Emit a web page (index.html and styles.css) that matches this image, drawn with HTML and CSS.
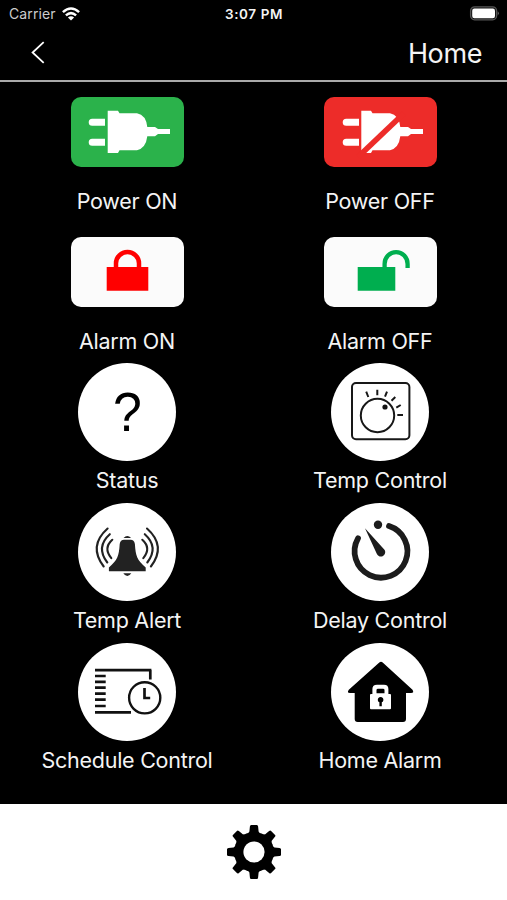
FILE: index.html
```html
<!DOCTYPE html>
<html lang="en">
<head>
<meta charset="utf-8">
<title>Home</title>
<link rel="stylesheet" href="styles.css">
</head>
<body>
<div class="status-bar">
  <div class="carrier"><span>Carrier</span>
    <svg width="18" height="14" viewBox="0 0 18 14" fill="none" stroke="#fff" stroke-width="2.5"><path d="M.9 5.2Q9-2.2 17.1 5.2M3.9 8.4Q9 3.9 14.1 8.4"/><path d="M9 13.5 5.9 10.4Q9 7.9 12.1 10.4Z" fill="#fff" stroke="none"/></svg>
  </div>
  <div class="time">3:07 PM</div>
  <div class="battery"><svg width="30" height="15" viewBox="0 0 30 15"><rect x="1.6" y=".8" width="26" height="13" rx="4" fill="#111" stroke="#555" stroke-width="1.3"/><rect x="3.2" y="2.5" width="22.8" height="9.8" rx="2.2" fill="#fff"/><path d="M28.7 5.2Q31 7.3 28.7 9.4Z" fill="#666"/></svg></div>
</div>
<header class="nav">
  <svg class="back" width="14" height="23" viewBox="0 0 14 23" fill="none" stroke="#fff" stroke-width="1.8"><path d="M12.7 1.2 1.6 11.5 12.7 21.8"/></svg>
  <h1>Home</h1>
</header>
<main class="grid">
  <div class="cell wide">
    <svg class="tile green" viewBox="0 0 113 70" fill="#fff"><path d="M34 21.7H21.2a3.5 3.5 0 0 0 0 7H34ZM34 41.7H21.2a3.5 3.5 0 0 0 0 7H34ZM36.7 13.7H47L48.5 16.3H66Q75 18 76.3 30H84L87 32H99V37H87L84 39.3H76.3Q75 51 66 53.3H48.5L47 56H36.7Z"/></svg>
    <span class="label">Power ON</span>
  </div>
  <div class="cell wide">
    <svg class="tile red" viewBox="0 0 113 70" fill="#fff"><path d="M35 21.7H22.2a3.5 3.5 0 0 0 0 7H35ZM35 41.7H22.2a3.5 3.5 0 0 0 0 7H35ZM37.3 13.7H47L48.5 16.3H66Q75 18 76.3 30H84L87 32H99V37H87L84 39.3H76.3Q75 51 66 53.3H48.5L47 56H37.3Z"/><path d="M80 16.2 34 60" stroke="#ed2c29" stroke-width="5.6"/></svg>
    <span class="label">Power OFF</span>
  </div>
  <div class="cell wide">
    <svg class="tile white" viewBox="0 0 113 70"><path fill="#f00" d="M35.7 30H77.3V53.7H35.7Z"/><path d="M45 31V26.2A11.5 11.2 0 0 1 68 26.2V31" fill="none" stroke="#f00" stroke-width="4.5"/></svg>
    <span class="label">Alarm ON</span>
  </div>
  <div class="cell wide">
    <svg class="tile white" viewBox="0 0 113 70"><path fill="#00ae4f" d="M33.7 30H71.3V53.7H33.7Z"/><path d="M60.6 31V27A11.5 11.9 0 0 1 83.6 27V31" fill="none" stroke="#00ae4f" stroke-width="4.3"/></svg>
    <span class="label">Alarm OFF</span>
  </div>
  <div class="cell">
    <div class="disc question"><span>?</span></div>
    <span class="label">Status</span>
  </div>
  <div class="cell">
    <svg class="disc" viewBox="0 0 98 98" fill="none" stroke="#181818" stroke-width="2"><rect x="21" y="20" width="57.4" height="56.3" rx="4"/><circle cx="46.5" cy="52.5" r="16.7"/><circle cx="54" cy="44" r="2.6" fill="#111" stroke="none"/><path d="M35.2 28.7 37.3 34M46.3 26.7V32.3M56 28.7 54 33.7M64.3 34 60.5 37.7M69.7 42 65.3 44.7M72 52H66.3"/></svg>
    <span class="label">Temp Control</span>
  </div>
  <div class="cell">
    <svg class="disc" viewBox="0 0 98 98" fill="#222"><path d="M41.7 41Q42.5 36.8 46 36.8H52.6Q56.1 36.8 56.9 41C57.7 53 59 57 67.7 64.5V68.2H30.9V64.5C39.6 57 40.9 53 41.7 41ZM45.5 35Q49.3 31.2 53.1 35ZM45.3 70.2H53.3Q49.3 76 45.3 70.2Z"/><g fill="none" stroke="#222" stroke-width="2.1" stroke-linecap="round"><path d="M29.6 25.5Q10 43 25.7 63.5M31.8 31.2Q17.5 44 29.3 59.5M34.3 36.8Q25 45 33.3 55.2M69 25.5Q88.6 43 72.9 63.5M66.8 31.2Q81.1 44 69.3 59.5M64.3 36.8Q73.6 45 65.3 55.2"/></g></svg>
    <span class="label">Temp Alert</span>
  </div>
  <div class="cell">
    <svg class="disc" viewBox="0 0 98 98" fill="#1c1c1c"><path d="M58 23.1A26.4 26.4 0 1 1 27 35.3" fill="none" stroke="#1c1c1c" stroke-width="5.8" stroke-linecap="round"/><circle cx="47" cy="21.7" r="4.2"/><path d="M34 25.2 53.7 47A4.4 4.4 0 1 1 46 51.3Z"/></svg>
    <span class="label">Delay Control</span>
  </div>
  <div class="cell">
    <svg class="disc" viewBox="0 0 98 98" fill="none" stroke="#111" stroke-width="2.7"><path d="M17 27.2H73.4M72.3 27V36.5M17 69.3H53M17 33H27.7M17 38.8H27.7M17 44.7H27.7M17 50.7H27.7M17 56.7H27.7M17 63H27.7M66.5 45V55H72.2"/><circle cx="66.7" cy="54.8" r="15.6" stroke-width="2.4"/></svg>
    <span class="label">Schedule Control</span>
  </div>
  <div class="cell">
    <svg class="disc" viewBox="0 0 98 98"><path d="M48.3 19.5Q50 18 51.7 19.5L81.5 46.8Q83.5 50 80 50H75V76Q75 79 72 79H26.7Q23.7 79 23.7 76V50H19Q15.5 50 17.8 46.8Z"/><path fill="#fff" fill-rule="evenodd" d="M41.4 51V46Q41.4 41.7 46 41.7H53Q57.4 41.7 57.4 46V51H59Q60 51 60 52V65.3Q60 66.3 59 66.3H40Q39 66.3 39 65.3V52Q39 51 40 51ZM45.5 50.3H53.5V47Q53.5 45.7 52 45.7H47Q45.5 45.7 45.5 47ZM48.4 63.2H50.8V59.3A2.8 2.8 0 1 0 48.4 59.3Z"/></svg>
    <span class="label">Home Alarm</span>
  </div>
</main>
<footer class="footer">
  <svg width="54" height="54" viewBox="-27 -27 54 54"><g id="teeth"><path id="bar" d="M-2.8-27H2.8Q4-27 4.1-25.5L4.6-20.5 7-17V17L4.6 20.5 4.1 25.5Q4 27 2.8 27H-2.8Q-4 27-4.1 25.5L-4.6 20.5-7 17V-17L-4.6-20.5-4.1-25.5Q-4-27-2.8-27Z"/><use href="#bar" transform="rotate(90)"/></g><use href="#teeth" transform="rotate(45)"/><circle r="20"/><circle r="10.6" fill="#fff"/></svg>
</footer>
</body>
</html>
```
FILE: styles.css
```css
* { box-sizing: border-box; }
body {
  margin: 0;
  height: 900px;
  display: flex;
  flex-direction: column;
  overflow: hidden;
  background: #000;
  color: #f4f4f4;
  font-family: Inter, "Liberation Sans", sans-serif;
}
svg { display: block; flex: none; }
.status-bar {
  height: 27px;
  padding: 0 8px 0 9px;
  display: grid;
  grid-template-columns: 1fr auto 1fr;
  align-items: center;
  font-size: 14px;
}
.carrier { display: flex; align-items: center; gap: 6px; color: #ccc; letter-spacing: 0.1px; }
.time { font-size: 13.5px; font-weight: 600; letter-spacing: 0.6px; }
.battery { justify-self: end; }
.nav {
  height: 55px;
  padding: 0 25px 2px 31px;
  display: flex;
  align-items: center;
  justify-content: space-between;
  border-bottom: 2px solid #aaa;
}
.nav h1 {
  margin: 2px 0 0;
  font-size: 27px;
  font-weight: 400;
  line-height: 32px;
  letter-spacing: -0.4px;
}
.grid {
  height: 721.5px;
  flex: none;
  display: grid;
  grid-template-columns: 254px 252px;
  grid-auto-rows: 140px;
}
.cell {
  display: flex;
  flex-direction: column;
  align-items: center;
  padding-top: 1px;
  gap: 5px;
}
.wide { padding-top: 15px; gap: 20px; }
.tile { width: 113px; height: 70px; border-radius: 10px; }
.green { background: #2bb24b; }
.red { background: #ed2c29; }
.white { background: #fbfbfb; }
.disc { width: 98px; height: 98px; border-radius: 50%; background: #fff; }
.question {
  color: #000;
  font: 55px/98px "Liberation Sans", sans-serif;
  text-align: center;
}
.question span { display: inline-block; transform: scaleX(0.94); }
.label {
  font-size: 21.5px;
  line-height: 28px;
  letter-spacing: -0.26px;
  white-space: nowrap;
}
.footer {
  flex: 1;
  display: flex;
  align-items: center;
  justify-content: center;
  background: #fff;
}
```
